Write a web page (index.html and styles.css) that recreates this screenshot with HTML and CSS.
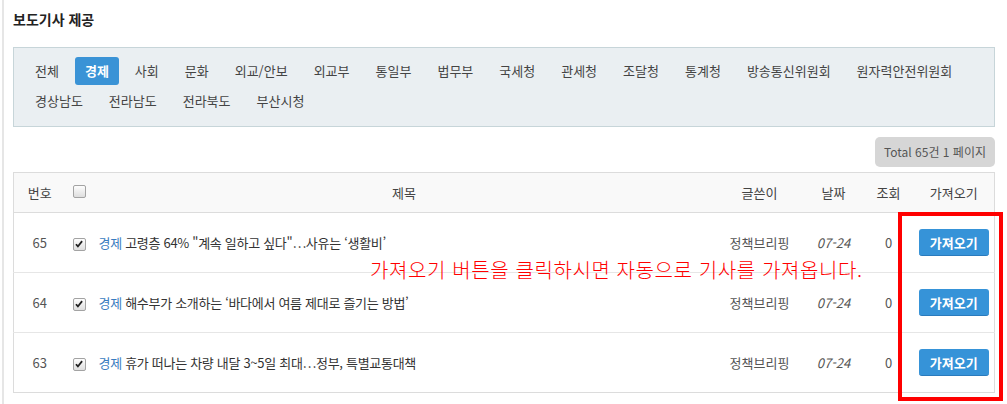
FILE: index.html
```html
<!DOCTYPE html>
<html lang="ko">
<head>
    <meta charset="UTF-8">
    <title>보도기사 제공</title>
    <link rel="stylesheet" href="styles.css">
</head>
<body>

    <div class="page">
        <h3 class="page-title">보도기사 제공</h3>

        <div class="category-box">
            <ul class="category-list">
                <li><a href="#">전체</a></li>
                <li><a href="#" class="active">경제</a></li>
                <li><a href="#">사회</a></li>
                <li><a href="#">문화</a></li>
                <li><a href="#">외교/안보</a></li>
                <li><a href="#">외교부</a></li>
                <li><a href="#">통일부</a></li>
                <li><a href="#">법무부</a></li>
                <li><a href="#">국세청</a></li>
                <li><a href="#">관세청</a></li>
                <li><a href="#">조달청</a></li>
                <li><a href="#">통계청</a></li>
                <li><a href="#">방송통신위원회</a></li>
                <li><a href="#">원자력안전위원회</a></li>
                <li><a href="#">경상남도</a></li>
                <li><a href="#">전라남도</a></li>
                <li><a href="#">전라북도</a></li>
                <li><a href="#">부산시청</a></li>
            </ul>
        </div>

        <div class="list-info">
            <span class="total">Total 65건 1 페이지</span>
        </div>

        <div class="board">
            <table class="board-table">
                <colgroup>
                    <col class="col-num">
                    <col class="col-check">
                    <col>
                    <col class="col-writer">
                    <col class="col-date">
                    <col class="col-hit">
                    <col class="col-import">
                </colgroup>
                <thead>
                    <tr>
                        <th>번호</th>
                        <th><input type="checkbox" class="check"></th>
                        <th>제목</th>
                        <th>글쓴이</th>
                        <th>날짜</th>
                        <th>조회</th>
                        <th>가져오기</th>
                    </tr>
                </thead>
                <tbody>
                    <tr>
                        <td class="num">65</td>
                        <td><input type="checkbox" class="check" checked></td>
                        <td class="subject"><span class="cate">경제</span> 고령층 64% "계속 일하고 싶다"…사유는 ‘생활비’</td>
                        <td>정책브리핑</td>
                        <td class="date">07-24</td>
                        <td>0</td>
                        <td><button class="btn-import">가져오기</button></td>
                    </tr>
                    <tr>
                        <td class="num">64</td>
                        <td><input type="checkbox" class="check" checked></td>
                        <td class="subject"><span class="cate">경제</span> 해수부가 소개하는 ‘바다에서 여름 제대로 즐기는 방법’</td>
                        <td>정책브리핑</td>
                        <td class="date">07-24</td>
                        <td>0</td>
                        <td><button class="btn-import">가져오기</button></td>
                    </tr>
                    <tr>
                        <td class="num">63</td>
                        <td><input type="checkbox" class="check" checked></td>
                        <td class="subject"><span class="cate">경제</span> 휴가 떠나는 차량 내달 3~5일 최대…정부, 특별교통대책</td>
                        <td>정책브리핑</td>
                        <td class="date">07-24</td>
                        <td>0</td>
                        <td><button class="btn-import">가져오기</button></td>
                    </tr>
                </tbody>
            </table>

            <!-- 안내 표시 -->
            <p class="guide-text">가져오기 버튼을 클릭하시면 자동으로 기사를 가져옵니다.</p>
            <div class="guide-box"></div>
        </div>
    </div>

</body>
</html>
```

FILE: styles.css
```css
body {
    font-family: "Noto Sans CJK KR", "Noto Sans", sans-serif;
    font-size: 13px;
    color: #333;
    margin: 0;
    padding: 0;
    background-color: #fff;
}

.page {
    margin-left: 2px;
    border-left: 2px solid #e6e6e6;
    padding: 11px 12px 0 9px;
    min-height: 100vh;
    box-sizing: border-box;
}

.page-title {
    margin: 0 0 20px;
    font-size: 14px;
    line-height: 16px;
    font-weight: bold;
    color: #222;
}

/* 분류 */
.category-box {
    background-color: #eaeff2;
    border: 1px solid #c7d5d9;
    padding: 9px 11px 11px;
}

.category-list {
    list-style: none;
    margin: 0;
    padding: 0;
    display: flex;
    flex-wrap: wrap;
    gap: 2px 6px;
}

.category-list a {
    display: block;
    padding: 0 10px;
    line-height: 28px;
    color: #444;
    text-decoration: none;
    border-radius: 3px;
}

.category-list a.active {
    background-color: #3a93d6;
    color: #fff;
    font-weight: bold;
}

.list-info {
    display: flex;
    justify-content: flex-end;
    margin: 10px 0 5px;
}

.total {
    display: inline-block;
    width: 120px;
    height: 30px;
    line-height: 30px;
    text-align: center;
    background-color: #d6d6d6;
    border-radius: 5px;
    color: #555;
    font-size: 12px;
}

/* 목록 */
.board {
    position: relative;
}

.board-table {
    width: 100%;
    table-layout: fixed;
    border-collapse: collapse;
    border: 1px solid #dcdcdc;
}

.col-num { width: 52px; }
.col-check { width: 27px; }
.col-writer { width: 88px; }
.col-date { width: 60px; }
.col-hit { width: 50px; }
.col-import { width: 81px; }

.board-table th {
    height: 39px;
    background-color: #f9f9f9;
    border-bottom: 1px solid #dcdcdc;
    font-weight: normal;
    color: #444;
    padding: 0;
}

.board-table th .check {
    margin-bottom: 5px;
}

.board-table td {
    height: 59px;
    border-top: 1px solid #e6e6e6;
    text-align: center;
    color: #555;
    padding: 0;
}

.board-table td.subject {
    text-align: left;
    padding-left: 6px;
    color: #333;
    letter-spacing: -0.3px;
    font-variant-east-asian: proportional-width;
}

.cate {
    color: #3a7cc0;
}

.board-table td.date {
    font-style: italic;
}

.check {
    appearance: none;
    -webkit-appearance: none;
    width: 13px;
    height: 13px;
    margin: 0;
    border: 1px solid #a3a3a3;
    border-radius: 2px;
    background: linear-gradient(#fdfdfd, #dedede);
    vertical-align: middle;
}

.check:checked {
    background: url("data:image/svg+xml;utf8,<svg xmlns='http://www.w3.org/2000/svg' viewBox='0 0 11 11'><path d='M2.2 5.8 L4.3 8.2 L8.9 2.4' fill='none' stroke='%23222' stroke-width='2'/></svg>") center / 10px 10px no-repeat, linear-gradient(#fdfdfd, #dedede);
}

.btn-import {
    width: 70px;
    height: 27px;
    padding: 0;
    border: none;
    border-bottom: 1px solid #2a7bbd;
    border-radius: 3px;
    background-color: #3693d8;
    color: #fff;
    font-family: inherit;
    font-size: 13px;
    font-weight: bold;
    cursor: pointer;
    vertical-align: middle;
}

.guide-text {
    position: absolute;
    left: 357px;
    top: 86px;
    margin: 0;
    font-size: 20px;
    line-height: 24px;
    font-weight: 300;
    letter-spacing: 0.6px;
    color: #ff0000;
}

.guide-box {
    position: absolute;
    left: 885px;
    top: 40px;
    width: 105px;
    height: 189px;
    box-sizing: border-box;
    border: 4px solid #ff0000;
}
```
